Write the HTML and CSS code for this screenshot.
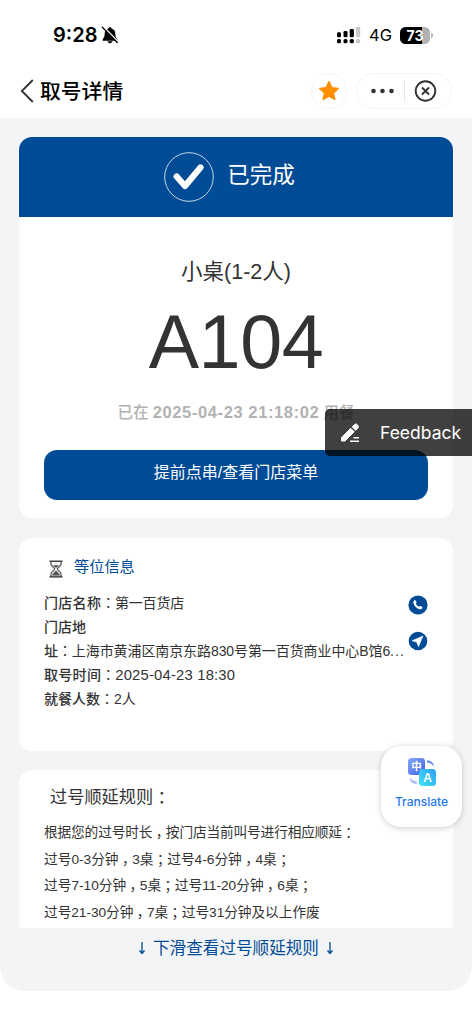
FILE: index.html
```html
<!DOCTYPE html>
<html lang="zh-CN">
<head>
<meta charset="utf-8">
<title>取号详情</title>
<link rel="stylesheet" href="styles.css">
</head>
<body>
<div class="status">
  <div class="clock"><span>9:28</span>
    <svg width="18" height="18" viewBox="0 0 18 18"><path d="M9 1.200c.9 0 1.400.5 1.500 1.200 2.400.7 3.800 2.600 3.800 5 0 3 .6 4 2 5.600v1.700H1.700V13c1.400-1.600 2-2.600 2-5.600 0-2.400 1.400-4.300 3.800-5C7.600 1.700 8.100 1.200 9 1.200zM6.500 15.300h5c-.2 1.200-1.400 2-2.500 2s-2.300-.8-2.500-2z" fill="#000"/><path d="M2.500.8l15 15.200" stroke="#fff" stroke-width="1.500"/><path d="M1.300 1.300l15 15.200" stroke="#000" stroke-width="1.300" stroke-linecap="round"/></svg>
  </div>
  <div class="signals">
    <svg width="24" height="17" viewBox="0 0 24 17"><g fill="#000"><rect x="0" y="5.300" width="4" height="5" rx="1.300"/><rect x="6.500" y="4" width="4" height="6.300" rx="1.300"/><rect x="12.700" y="2" width="4.200" height="8.300" rx="1.300"/><rect x="0" y="12" width="4" height="4.300" rx="1.500"/><rect x="6.500" y="12" width="4" height="4.300" rx="1.500"/><rect x="12.700" y="12" width="4.200" height="4.300" rx="1.500"/></g><g fill="#c8c8c8"><rect x="19" y="0" width="4.200" height="10.300" rx="1.300"/><rect x="19" y="12" width="4.200" height="4.300" rx="1.500"/></g></svg>
    <span class="net">4G</span>
    <div class="battery"><span>73</span></div><div class="cap"></div>
  </div>
</div>
<header class="nav">
  <svg class="back" width="14" height="24" viewBox="0 0 14 24"><path d="M12.800 1L1.800 12l11 11" fill="none" stroke="#333" stroke-width="1.800"/></svg>
  <h1>取号详情</h1>
  <div class="fav"><svg width="22" height="22" viewBox="0 0 22 22"><path d="M11 1.600l2.800 6 6.500.8-4.800 4.500 1.300 6.500L11 16.200l-5.800 3.200 1.300-6.500L1.700 8.400l6.500-.8z" fill="#ff8f00" stroke="#ff8f00" stroke-width="1.400" stroke-linejoin="round"/></svg></div>
  <div class="capsule">
    <svg width="94" height="34" viewBox="0 0 94 34"><g fill="#333"><circle cx="16.500" cy="17" r="2.300"/><circle cx="25.500" cy="17" r="2.300"/><circle cx="34.500" cy="17" r="2.300"/></g><path d="M47.500 6.500v21" stroke="#e5e5e5"/><circle cx="68.500" cy="17" r="9.800" fill="none" stroke="#333" stroke-width="1.900"/><path d="M65 13.500l7 7m0-7l-7 7" stroke="#333" stroke-width="1.900"/></svg>
  </div>
</header>
<main class="page">
  <section class="card ticket">
    <div class="banner">
      <svg width="50" height="50" viewBox="0 0 50 50"><circle cx="25" cy="25" r="24.300" fill="none" stroke="#dce7f2" stroke-width=".9"/><path d="M12.700 24.500l8.300 9.500L36.500 15.500" fill="none" stroke="#fff" stroke-width="6.200" stroke-linecap="round" stroke-linejoin="round"/></svg>
      <span>已完成</span>
    </div>
    <div class="table">小桌(1-2人)</div>
    <div class="number">A104</div>
    <div class="done">已在 <b>2025-04-23 21:18:02</b> 用餐</div>
    <div class="menu">提前点串/查看门店菜单</div>
  </section>
  <section class="card info">
    <h2><svg width="14" height="18" viewBox="0 0 14 18"><path d="M.5 1.300h13M.5 16.700h13" stroke="#444" stroke-width="1.600"/><path d="M2 2v2.200c0 2 3.700 3.400 3.700 4.800S2 11.600 2 14v2.500h10V14c0-2.400-3.700-3.600-3.700-5S12 6.200 12 4.200V2" fill="none" stroke="#555" stroke-width="1.300"/><path d="M3.800 5.200h6.400L7 8zM7 10.500l3.500 3.500v1.500h-7V14z" fill="#555"/></svg><span>等位信息</span></h2>
    <div class="details">
      <div class="rows">
        <p class="r1"><b>门店名称</b><i lang="zh-TW">：</i>第一百货店</p>
        <p class="r2"><b>门店地</b></p>
        <p class="r3"><b>址</b><i lang="zh-TW">：</i>上海市黄浦区南京东路830号第一百货商业中心B馆6<span>...</span></p>
        <p class="r4"><b>取号时间</b><i lang="zh-TW">：</i><span>2025-04-23 18:30</span></p>
        <p class="r5"><b>就餐人数</b><i lang="zh-TW">：</i>2人</p>
      </div>
      <div class="actions">
        <svg width="20" height="20" viewBox="0 0 20 20"><circle cx="10" cy="10" r="9.600" fill="#004b95"/><path d="M6.200 5.400c.5-.5 1-.4 1.400.2l.9 1.500c.3.5 0 .8-.6 1.300.5 1.400 1.700 2.600 3.200 3.200.5-.6.8-.9 1.300-.6l1.700.9c.6.400.7.900.2 1.400-.7.900-1.800 1.400-3.100 1C8.500 13.400 6.500 11.400 5.500 8.600 5 7.400 5.400 6.200 6.200 5.400z" fill="#fff"/></svg>
        <svg width="20" height="20" viewBox="0 0 20 20"><circle cx="10" cy="10" r="9.300" fill="#004b95"/><path d="M15 5L4.200 9.700l4.600 1.500L10.500 15.600z" fill="#fff" stroke="#fff" stroke-width=".6" stroke-linejoin="round"/></svg>
      </div>
    </div>
  </section>
  <section class="card rules">
    <h3>过号顺延规则<i>：</i></h3>
    <p class="l1">根据您的过号时长<i>，</i>按门店当前叫号进行相应顺延<i>：</i></p>
    <p class="l2">过号0-3分钟<i>，</i>3桌<i>；</i>过号4-6分钟<i>，</i>4桌<i>；</i></p>
    <p class="l3">过号7-10分钟<i>，</i>5桌<i>；</i>过号11-20分钟<i>，</i>6桌<i>；</i></p>
    <p class="l4">过号21-30分钟<i>，</i>7桌<i>；</i>过号31分钟及以上作废</p>
  </section>
  <footer><svg width="8" height="13" viewBox="0 0 8 13"><path d="M4 0v11M1.500 8.500L4 11.500l2.500-3" fill="none" stroke="#004b95" stroke-width="1.300"/></svg><span>下滑查看过号顺延规则</span><svg width="8" height="13" viewBox="0 0 8 13"><path d="M4 0v11M1.500 8.500L4 11.500l2.500-3" fill="none" stroke="#004b95" stroke-width="1.300"/></svg></footer>
</main>
<div class="feedback">
  <svg width="20" height="20" viewBox="0 0 20 20"><path d="M1.500 14.500L10.700 5.300l3.500 3.500-9.200 9.200H1.500zM12.200 3.800L14.500 1.500c.7-.7 1.700-.7 2.400 0l1.100 1.100c.7.700.7 1.700 0 2.400l-2.300 2.300z" fill="#fff" stroke="#fff" stroke-width="1" stroke-linejoin="round"/><path d="M13.500 14.800h5.500M10 18.300h9" stroke="#fff" stroke-width="1.500"/></svg>
  <span>Feedback</span>
</div>
<div class="translate">
  <svg width="30" height="30" viewBox="0 0 30 30"><defs><linearGradient id="ga" x1="0" y1="0" x2="1" y2="1"><stop offset="0" stop-color="#88a9f8"/><stop offset="1" stop-color="#3c60e4"/></linearGradient><linearGradient id="gb" x1="0" y1="1" x2="1" y2="0"><stop offset="0" stop-color="#42e5fa"/><stop offset="1" stop-color="#2d9df4"/></linearGradient></defs><rect x="1" y="1" width="17" height="17" rx="3.500" fill="url(#ga)"/><rect x="12" y="12" width="17" height="17" rx="3.500" fill="url(#gb)"/><path d="M20 3.200c4 0 6.700 2.400 7 6.600-2-2.700-4-4-7-4.200z" fill="#6b8fe8"/><path d="M2.800 20.500c2 2.700 4 3.700 7 3.900v2.500c-4 0-6.700-2-7-6.400z" fill="#9bbcf5"/><text x="9.500" y="13.300" class="zh">中</text><text x="20.500" y="25" class="en">A</text></svg>
  <span>Translate</span>
</div>
</body>
</html>
```
FILE: styles.css
```css
* { box-sizing: border-box; }
body { margin: 0; width: 472px; height: 1023px; position: relative; overflow: hidden; background: #fff; color: #333; font-family: "Liberation Sans", "Noto Sans CJK SC", sans-serif; }
h1, h2, h3, p { margin: 0; font-weight: 400; white-space: nowrap; }
svg { display: block; flex: none; }
i { font-family: "Noto Sans CJK TC", sans-serif; font-style: normal; line-height: 0; }
.status { height: 64px; padding: 6px 39px 0 53px; display: flex; align-items: center; justify-content: space-between; color: #000; }
.clock { display: flex; align-items: center; font: 600 20px/24px Inter, sans-serif; gap: 4px; }
.signals { display: flex; align-items: center; }
.net { font: 400 16.500px/20px Inter, sans-serif; margin: 0 8px 0 8px; }
.battery { width: 30px; height: 17px; border-radius: 5.500px; background: linear-gradient(90deg, #000 73%, #b1b1b1 73%); color: #fff; font: 700 14px/17px Inter, sans-serif; text-align: center; }
.cap { width: 2px; height: 5px; margin-left: 1px; border-radius: 0 2px 2px 0; background: #b1b1b1; }
.nav { height: 54px; display: flex; align-items: center; padding: 0 20px; }
.nav h1 { color: #000; font: 500 20.800px/30px "Noto Sans CJK SC", sans-serif; margin: -2px 0 0 6px; flex: 1; }
.fav { width: 36px; height: 36px; border: 1px solid #f5f5f5; border-radius: 50%; display: flex; align-items: center; justify-content: center; margin-right: 9px; }
.capsule { width: 96px; height: 36px; border: 1px solid #f5f5f5; border-radius: 18px; }
.page { height: 873px; padding: 19px 19px 0; background: #f3f4f6; border-radius: 0 0 25px 25px; }
.card { width: 434px; background: #fff; border-radius: 13px; overflow: hidden; }
.ticket { height: 381px; margin-bottom: 20px; text-align: center; }
.banner { height: 80px; background: #004b95; color: #fff; display: flex; justify-content: center; gap: 13px; font-size: 22.500px; line-height: 77px; padding-right: 13px; }
.banner svg { margin-top: 15px; }
.table { height: 88px; padding-top: 39px; font-size: 21.500px; line-height: 32px; }
.number { font-size: 75.500px; line-height: 76px; letter-spacing: -.4px; margin-top: -1px; }
.done { color: #b2b2b2; font-size: 15.500px; line-height: 20px; font-weight: 500; margin-top: 22px; }
.done b { font-size: 16.500px; letter-spacing: .6px; }
.menu { width: 384px; height: 50px; margin: 27px auto 0; border-radius: 13px; background: #004b95; color: #fff; font-size: 16px; line-height: 46px; }
.info { height: 213px; margin-bottom: 19px; padding: 17px 25px 0; }
.info h2 { display: flex; align-items: center; color: #004b95; font-size: 15.200px; line-height: 24px; }
.info h2 svg { margin: 3px 11px 0 5px; }
.details { display: flex; margin-top: 12px; justify-content: space-between; }
.rows { font-size: 14px; line-height: 24px; }
.rows p { height: 24px; }
.rows b { font-weight: 500; }
.r1 b, .r4 b { letter-spacing: .3px; }
.r1 { letter-spacing: -.2px; }
.r3 { letter-spacing: -.09px; }
.r3 span { letter-spacing: 1.100px; }
.r4 span { font-size: 14.800px; letter-spacing: .2px; }
.actions { display: flex; flex-direction: column; gap: 16px; padding-top: 4px; margin-left: -6px; }
.rules { height: 158px; padding: 14px 25px 0; border-radius: 13px 13px 0 0; }
.rules i { font-family: "Noto Sans CJK SC", sans-serif; font-feature-settings: "halt"; margin: 0 .25em; }
.rules h3 { height: 26px; font-size: 17.200px; line-height: 26px; padding-left: 6px; margin-bottom: 10px; }
.rules p { height: 26.500px; font-size: 13.700px; line-height: 26px; }
.rules .l1 { letter-spacing: -.15px; }
.rules .l4 { letter-spacing: -.05px; }
footer { display: flex; align-items: center; justify-content: center; gap: 7px; height: 41px; color: #004b95; font-size: 16.600px; line-height: 41px; }
.feedback { position: absolute; left: 325px; top: 409px; width: 147px; height: 47px; border-radius: 5px 0 0 5px; background: rgba(0,0,0,.75); color: #fff; display: flex; align-items: center; padding-left: 15px; gap: 20px; font: 400 17.500px/47px Inter, sans-serif; }
.translate { position: absolute; left: 381px; top: 746px; width: 81px; height: 81px; border-radius: 20px; background: #fff; box-shadow: 0 1px 6px rgba(0,0,0,.2); display: flex; flex-direction: column; align-items: center; padding-top: 11px; color: #2878f0; font: 500 12px/18px Inter, sans-serif; }
.translate span { margin-top: 6px; }
.translate text { fill: #fff; text-anchor: middle; }
.zh { font: 700 10.500px "Noto Sans CJK SC", sans-serif; }
.en { font: 700 12px "Liberation Sans", sans-serif; }
```
